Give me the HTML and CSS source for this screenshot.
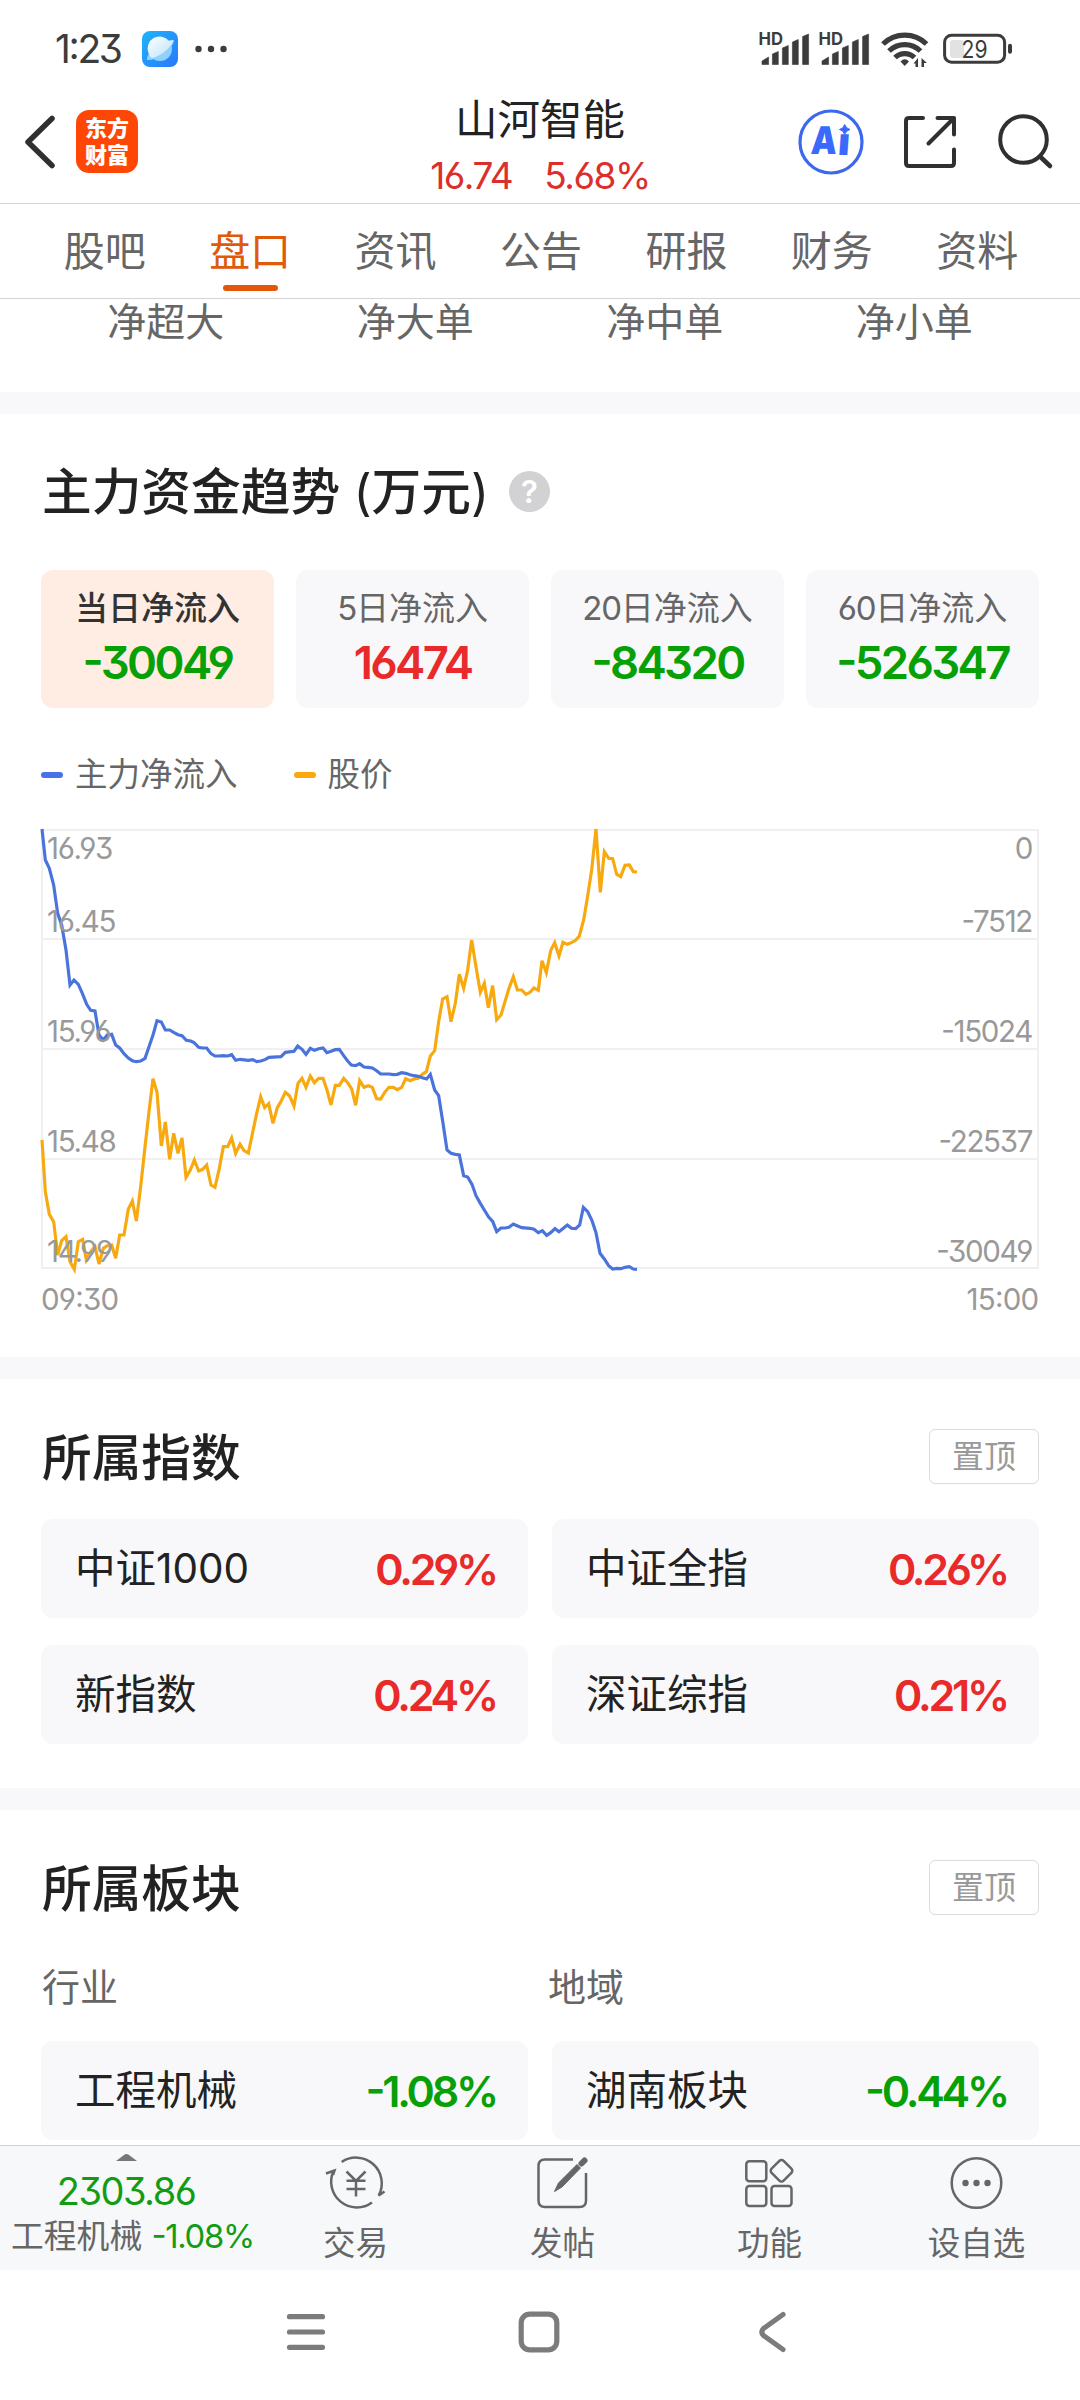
FILE: index.html
```html
<!DOCTYPE html>
<html lang="zh-CN">
<head>
<meta charset="utf-8">
<title>山河智能</title>
<link rel="stylesheet" href="styles.css">
</head>
<body>
<div class="phone">
  <div class="status">
    <span class="clock num">1:23</span>
    <svg class="app-badge" width="36" height="36" viewBox="0 0 36 36">
      <defs>
        <linearGradient id="sky" x1="0" y1="0" x2="1" y2="1"><stop offset="0" stop-color="#1fb4fb"/><stop offset="1" stop-color="#2a78fb"/></linearGradient>
        <linearGradient id="globe" x1="0" y1="0" x2="1" y2="1"><stop offset="0" stop-color="#fff"/><stop offset="1" stop-color="#b9e2fd"/></linearGradient>
      </defs>
      <rect width="36" height="36" rx="8" fill="url(#sky)"/>
      <path d="M5 29 Q4 26 9 20 L26 10 Q31 8 32 10 Q31 15 22 22 Q12 30 5 29Z" fill="#8fd2fc"/>
      <circle cx="18" cy="18" r="12" fill="#8fd0fc"/>
      <path d="M6.500 22 A12 12 0 0 1 27 10 L31.500 9 Q30 15 21 22 Q13 27 9.500 27 Q7.500 25 6.500 22Z" fill="url(#globe)"/>
    </svg>
    <svg width="34" height="10" viewBox="0 0 34 10" fill="#3c3c3c"><circle cx="4.500" cy="5" r="3.200"/><circle cx="17" cy="5" r="3.200"/><circle cx="29.500" cy="5" r="3.200"/></svg>
    <svg class="signals" width="260" height="40" viewBox="756 30 260 40" fill="#3c3c3c">
      <g id="sim">
        <text x="758.500" y="45.300" class="hd" textLength="24.500" lengthAdjust="spacingAndGlyphs">HD</text>
        <path stroke="#3c3c3c" stroke-width=".6" stroke-linejoin="round" d="M762 64.500V61L768.600 57V64.500ZM772.400 64.500V54L778.300 51.500V64.500ZM782.400 64.500V48L788.300 45.500V64.500ZM792.400 64.500V42L798.300 39.500V64.500ZM802.600 64.500V36.500L808.600 34V64.500Z"/>
      </g>
      <use href="#sim" x="60"/>
      <g fill="none" stroke="#3c3c3c" stroke-width="5.200">
        <path d="M883 44A31 31 0 0 1 926.500 44"/>
        <path d="M889 51A22.500 22.500 0 0 1 920.500 51"/>
        <path d="M895 57.500A14 14 0 0 1 914.500 57.500"/>
      </g>
      <path d="M904.700 66L900.500 61.500Q904.700 57 909 61.500Z"/>
      <path d="M918 58V67H915.500V63.500L913.500 63.500ZM921.500 67V58L927 63H924V67Z"/>
      <rect x="944.600" y="35.200" width="60" height="27" rx="7" fill="none" stroke="#3c3c3c" stroke-width="3"/>
      <rect x="950" y="40" width="14" height="18" rx="3" fill="#e2e2e2"/>
      <rect x="1008" y="43.700" width="4" height="10" rx="2"/>
      <text x="961.500" y="57.600" class="charge" textLength="26" lengthAdjust="spacingAndGlyphs">29</text>
    </svg>
  </div>

  <header class="topbar">
    <div class="brand">
      <svg width="36" height="56" viewBox="0 0 36 56" fill="none" stroke="#303030" stroke-width="5.500" stroke-linecap="round" stroke-linejoin="round"><path d="M30 4.500L6 28L30 51.500"/></svg>
      <div class="logo"><span>东方</span><span>财富</span></div>
    </div>
    <div class="quote">
      <h1>山河智能</h1>
      <p class="num"><span>16.74</span><span>5.68%</span></p>
    </div>
    <svg class="tools" width="260" height="70" viewBox="796 107 260 70">
      <circle cx="831" cy="142" r="31" fill="none" stroke="#3c68ee" stroke-width="3.200"/>
      <text class="ai" x="810" y="154" textLength="26" lengthAdjust="spacingAndGlyphs" transform="translate(11 0) skewX(-4)">A</text>
      <text class="ai" x="837" y="155" textLength="12" lengthAdjust="spacingAndGlyphs" transform="translate(11 0) skewX(-4)">ı</text>
      <path d="M844.700 124.500Q846 128.500 850 129.500Q846 130.500 844.700 134.500Q843.500 130.500 839.500 129.500Q843.500 128.500 844.700 124.500Z" fill="#3b69fb" stroke="#3b69fb"/>
      <g fill="none" stroke="#303030" stroke-width="4" stroke-linecap="round" stroke-linejoin="round">
        <path d="M923 118H909Q906 118 906 121V163Q906 166 909 166H951Q954 166 954 163V149.500"/>
        <path d="M937.500 118H954V134.500M953.500 118.500L928.500 143.500"/>
        <circle cx="1023.500" cy="139.500" r="23.300"/>
        <path d="M1040 156.500L1050 166" stroke-width="4.500"/>
      </g>
    </svg>
  </header>

  <nav class="tabs">
    <a>股吧</a><a class="on">盘口</a><a>资讯</a><a>公告</a><a>研报</a><a>财务</a><a>资料</a>
  </nav>

  <main>
    <section class="flows"><span>净超大</span><span>净大单</span><span>净中单</span><span>净小单</span></section>

    <section class="trend">
      <div class="head">
        <h2>主力资金趋势 <span class="paren">(</span>万元<span class="paren">)</span></h2>
        <span class="help">?</span>
      </div>
      <div class="periods">
        <div class="period active"><span>当日净流入</span><b class="num down">-30049</b></div>
        <div class="period"><span><i class="num">5</i>日净流入</span><b class="num up">16474</b></div>
        <div class="period"><span><i class="num">20</i>日净流入</span><b class="num down">-84320</b></div>
        <div class="period"><span><i class="num">60</i>日净流入</span><b class="num down">-526347</b></div>
      </div>
      <div class="legend"><span class="key blue">主力净流入</span><span class="key gold">股价</span></div>
      <svg class="chart" width="1080" height="510" viewBox="0 0 1080 510">
        <g fill="none" stroke="#f0f0f0" stroke-width="2">
          <rect x="42" y="20" width="996" height="438"/>
          <path d="M41 129H1039M41 239H1039M41 349H1039"/>
        </g>
        <g class="lines" transform="translate(30 0) scale(.33333)">
          <polyline stroke="#f7a90f" points="36,990 46,1145 58,1213 71,1235 83,1335 95,1292 108,1280 120,1355 133,1378 145,1295 158,1288 169,1350 182,1325 195,1310 207,1362 220,1315 232,1307 245,1305 257,1345 269,1275 282,1275 295,1197 307,1173 319,1233 332,1130 344,1020 357,905 369,806 381,847 394,1008 406,936 419,1048 431,970 444,1030 456,984 468,1102 481,1080 493,1050 506,1083 518,1078 530,1065 543,1125 555,1132 568,1075 580,1010 593,1010 605,984 617,1030 630,1003 642,1022 655,1029 667,972 680,910 692,860 704,893 716,881 729,940 742,893 754,872 766,847 779,858 792,888 804,820 816,805 828,832 841,798 853,818 866,805 879,805 891,840 903,885 916,826 928,826 941,805 953,818 965,837 977,886 989,812 1002,832 1015,827 1027,832 1040,866 1052,867 1064,847 1077,832 1090,832 1102,839 1115,832 1127,806 1140,812 1152,807 1165,805 1177,793 1189,785 1201,738 1214,722 1226,635 1238,567 1251,560 1263,635 1276,580 1288,493 1301,535 1313,480 1325,390 1338,470 1351,547 1363,520 1375,593 1388,527 1400,629 1413,615 1425,575 1437,535 1450,500 1462,540 1475,540 1488,553 1500,547 1512,534 1525,541 1536,452 1549,488 1562,422 1574,398 1587,438 1599,397 1612,403 1624,398 1637,391 1648,378 1661,330 1673,258 1685,180 1698,57 1711,247 1723,125 1736,145 1748,146 1760,193 1772,200 1785,166 1798,165 1810,185 1821,186"/>
          <polyline stroke="#4a73dc" points="36,57 46,150 58,175 71,225 83,310 95,345 108,420 120,525 132,510 145,523 157,550 170,583 182,601 195,603 207,675 220,690 232,675 245,673 257,705 269,714 282,731 295,744 307,752 319,755 332,753 345,745 357,710 370,672 381,632 394,636 406,660 419,660 431,667 444,674 456,677 469,691 482,693 492,698 506,712 518,714 530,714 543,731 555,738 567,738 580,737 593,738 605,734 617,751 630,748 655,751 668,749 680,755 692,753 705,749 717,742 753,740 766,727 792,724 803,708 816,718 828,733 841,715 853,721 866,716 879,714 891,728 903,724 916,719 928,718 941,737 953,753 964,765 977,767 989,761 1002,771 1015,772 1027,774 1040,782 1052,792 1077,792 1090,794 1102,793 1115,788 1127,790 1140,794 1152,797 1165,799 1177,803 1190,807 1201,793 1214,840 1226,857 1239,940 1251,1020 1263,1030 1276,1033 1288,1035 1301,1097 1313,1101 1326,1123 1338,1157 1351,1180 1363,1200 1376,1221 1388,1234 1400,1265 1413,1254 1425,1254 1437,1252 1450,1242 1463,1248 1475,1253 1500,1255 1512,1258 1525,1268 1537,1262 1550,1276 1562,1268 1575,1256 1587,1265 1600,1255 1612,1245 1624,1255 1637,1256 1649,1245 1660,1192 1673,1205 1686,1232 1698,1268 1710,1330 1723,1347 1736,1367 1748,1377 1760,1375 1773,1376 1785,1372 1798,1370 1810,1377 1821,1378"/>
        </g>
        <g class="axis">
          <text x="47" y="48.500">16.93</text><text x="47" y="121.500">16.45</text><text x="47" y="231.500">15.96</text><text x="47" y="341.500">15.48</text><text x="47" y="451.500">14.99</text>
          <text x="41" y="499.500" class="time">09:30</text>
          <g text-anchor="end"><text x="1032" y="48.500">0</text><text x="1032" y="121.500">-7512</text><text x="1032" y="231.500">-15024</text><text x="1032" y="341.500">-22537</text><text x="1032" y="451.500">-30049</text><text x="1038.500" y="499.500" class="time">15:00</text></g>
        </g>
      </svg>
    </section>

    <section class="group indexes">
      <div class="head"><h2>所属指数</h2><button>置顶</button></div>
      <div class="grid">
        <div class="item"><span>中证<i>1000</i></span><b class="num up">0.29%</b></div>
        <div class="item"><span>中证全指</span><b class="num up">0.26%</b></div>
        <div class="item"><span>新指数</span><b class="num up">0.24%</b></div>
        <div class="item"><span>深证综指</span><b class="num up">0.21%</b></div>
      </div>
    </section>

    <section class="group sectors">
      <div class="head"><h2>所属板块</h2><button>置顶</button></div>
      <div class="kinds"><span>行业</span><span>地域</span></div>
      <div class="grid">
        <div class="item"><span>工程机械</span><b class="num down">-1.08%</b></div>
        <div class="item"><span>湖南板块</span><b class="num down">-0.44%</b></div>
      </div>
    </section>
  </main>

  <footer class="dock">
    <div class="ticker">
      <svg width="21" height="7" viewBox="0 0 21 7"><path d="M0 7L8 1Q10.500 -1 13 1L21 7Z" fill="#777"/></svg>
      <strong class="num">2303.86</strong>
      <p>工程机械 <span class="num">-1.08%</span></p>
    </div>
    <a class="act">
      <svg width="64" height="60" viewBox="0 0 64 60"><path d="M17.700 9A25.700 25.700 0 0 1 54.700 42.500L60.500 38.500M9.500 18A25.700 25.700 0 0 0 48 49.500M2 20.500L10.500 17.500L9 22"/><path d="M22.500 18.500L32 28L41.500 18.500M22.500 27.700H41.500M22.500 36H41.500M32 28V43.500"/></svg>
      <span>交易</span>
    </a>
    <a class="act">
      <svg width="64" height="60" viewBox="0 0 64 60"><path d="M42 6.500H14Q7.500 6.500 7.500 13V47.500Q7.500 54 14 54H48.500Q55 54 55 47.500V20"/><path d="M23.500 38.500L27.500 30L46 11.500L49.500 15L31 34Z" fill="#666" stroke-width="1"/><path d="M50.500 10.500L53.500 7.500" stroke-width="6" stroke-linecap="round"/></svg>
      <span>发帖</span>
    </a>
    <a class="act">
      <svg width="64" height="60" viewBox="0 0 64 60"><rect x="8.300" y="8.300" width="20" height="20" rx="3"/><rect x="8.300" y="33" width="20" height="20" rx="3"/><rect x="33.500" y="33" width="20" height="20" rx="3"/><rect x="35" y="9.300" width="17" height="17" rx="3" transform="rotate(45 43.500 17.800)"/></svg>
      <span>功能</span>
    </a>
    <a class="act">
      <svg width="64" height="60" viewBox="0 0 64 60"><circle cx="31.500" cy="30" r="24.800"/><g fill="#666" stroke="none"><circle cx="20.500" cy="30" r="3.200"/><circle cx="31.500" cy="30" r="3.200"/><circle cx="42.500" cy="30" r="3.200"/></g></svg>
      <span>设自选</span>
    </a>
  </footer>

  <div class="sysnav">
    <svg width="40" height="44" viewBox="0 0 40 44"><path d="M3.500 6.700H36.500M3.500 22H36.500M3.500 37.300H36.500"/></svg>
    <svg width="44" height="44" viewBox="0 0 44 44"><rect x="4.200" y="4.200" width="35.600" height="35.600" rx="8.500"/></svg>
    <svg width="30" height="44" viewBox="0 0 30 44"><path d="M26 4.500L6.500 18.500Q3 22 6.500 25.500L26 39.500"/></svg>
  </div>
</div>
</body>
</html>
```
FILE: styles.css
```css
* { box-sizing: border-box; margin: 0; padding: 0; }

body {
  width: 1080px;
  height: 2400px;
  overflow: hidden;
  background: #fff;
  color: #222;
  font-family: Inter, "Noto Sans CJK SC", sans-serif;
}

i, b, strong { font-style: normal; }
h1, h2 { font-weight: 400; }

.phone { display: flex; flex-direction: column; height: 2400px; }

.num, .axis {
  font-feature-settings: "cv03", "cv04", "cv09", "case";
  letter-spacing: -0.04em;
}
.up { color: #e92a2a; }
.down { color: #07a007; }

/* status bar */
.status { display: flex; align-items: center; height: 98px; padding: 0 64px 0 55px; }
.clock { width: 87px; font-size: 39px; line-height: 98px; color: #3c3c3c; letter-spacing: -0.06em; }
.app-badge { margin-right: 16px; }
.signals { margin-left: auto; margin-top: 2px; }
.hd { font-size: 17px; font-weight: 700; }
.charge { font-size: 24px; }

/* title bar */
.topbar {
  display: grid;
  grid-template-columns: 1fr 300px 1fr;
  align-items: start;
  height: 106px;
  padding: 0 24px 0 22px;
  border-bottom: 1px solid #d4d4d4;
}
.brand { display: flex; align-items: center; gap: 18px; padding-top: 12px; }
.logo {
  display: flex;
  flex-direction: column;
  align-items: center;
  justify-content: center;
  width: 62px;
  height: 63px;
  border-radius: 13px;
  background: #ff4605;
  color: #fff;
  font-size: 22px;
  font-weight: 900;
  line-height: 27px;
}
.quote { display: flex; flex-direction: column; align-items: center; gap: 6px; padding-left: 2px; }
.quote h1 { font-size: 42.500px; line-height: 44px; }
.quote p { display: flex; gap: 32px; font-size: 37px; line-height: 56px; color: #dc2f2c; }
.tools { justify-self: end; margin-top: 9px; }
.ai { font-size: 38px; font-weight: 900; fill: #3b69fb; }

/* tabs */
.tabs { display: flex; height: 95px; padding: 0 30px 0 32px; border-bottom: 1px solid #d4d4d4; }
.tabs a {
  flex: 1;
  display: flex;
  flex-direction: column;
  align-items: center;
  font-size: 41px;
  line-height: 95px;
  color: #666;
}
.tabs .on { color: #e05a0b; }
.tabs .on::after {
  content: "";
  width: 55px;
  height: 6px;
  margin-top: -14px;
  border-radius: 3px;
  background: #e2570a;
}

main { height: 1846px; overflow: hidden; }

.flows { display: flex; height: 93px; padding: 0 41px; }
.flows span { flex: 1; text-align: center; font-size: 39px; line-height: 46px; color: #666; }

.trend, .group { border-top: 22px solid #f8f8fa; }
.head { display: flex; align-items: center; padding: 0 41px 0 42px; }
.head h2 { padding-top: 1px; font-size: 49.700px; font-weight: 500; line-height: 60px; color: #222; }

/* capital trend */
.trend { height: 965px; }
.trend .head { height: 155px; gap: 20px; }
.trend .head + .periods { margin-top: 1px; }
.paren { font-weight: 400; }
.help {
  width: 41px;
  height: 41px;
  border-radius: 50%;
  background: #d2d2d4;
  color: #fff;
  font-size: 31px;
  font-weight: 600;
  line-height: 41px;
  text-align: center;
}
.periods { display: grid; grid-template-columns: repeat(4, 1fr); gap: 22px; padding: 0 41px; }
.period {
  display: flex;
  flex-direction: column;
  align-items: center;
  height: 138px;
  padding-top: 11px;
  border-radius: 12px;
  background: #f8f8fa;
}
.period span { font-size: 33px; line-height: 55px; color: #666; }
.period b { font-size: 45.500px; font-weight: 600; line-height: 54px; letter-spacing: -0.058em; }
.period.active { background: #ffede4; }
.period.active span { font-weight: 500; color: #333; }

.legend { display: flex; gap: 56px; height: 102px; padding: 0 41px; }
.key { display: flex; align-items: center; gap: 12px; padding-top: 32px; font-size: 32.500px; line-height: 70px; color: #666; }
.key::before { content: ""; width: 22px; height: 6px; border-radius: 3px; background: #4872e8; }
.key.gold::before { background: #faa80e; }

.chart { display: block; }
.lines { fill: none; stroke-width: 9.500; }
.axis { font-size: 29.500px; fill: #999; letter-spacing: -0.045em; }
.time { letter-spacing: -0.025em; }

/* index and sector groups */
.group .head { justify-content: space-between; height: 140px; padding-top: 15px; }
.group h2 { padding-top: 3px; }
.group button {
  width: 110px;
  height: 55px;
  border: 1px solid #dcdcdc;
  border-radius: 6px;
  background: #fff;
  color: #999;
  font: inherit;
  font-size: 32px;
  line-height: 50px;
}
.grid { display: grid; grid-template-columns: 1fr 1fr; gap: 27px 24px; padding: 0 41px; }
.item {
  display: flex;
  justify-content: space-between;
  height: 99px;
  padding: 0 32px 0 34px;
  border-radius: 12px;
  background: #f8f8fa;
  font-size: 40.500px;
  line-height: 100px;
}
.item b { font-size: 43px; font-weight: 600; letter-spacing: -0.075em; }
.indexes { height: 431px; }
.kinds { display: grid; grid-template-columns: 506px 1fr; height: 91px; padding: 9px 41px 0 42px; font-size: 38px; line-height: 56px; color: #666; }

/* bottom dock */
.dock { display: flex; height: 125px; border-top: 1px solid #d2d2d2; background: #f7f8fa; }
.ticker { display: flex; flex-direction: column; align-items: center; width: 252px; padding-top: 8px; color: #666; }
.ticker strong { font-size: 38px; font-weight: 400; line-height: 60px; color: #139c13; }
.ticker p { align-self: flex-start; padding-left: 11px; font-size: 32.800px; line-height: 30px; white-space: nowrap; }
.ticker p .num { color: #139c13; }
.act { flex: 1; display: flex; flex-direction: column; align-items: center; height: 124px; padding-top: 7px; color: #666; }
.act svg { flex: none; fill: none; stroke: #666; stroke-width: 2.500; }
.act span { font-size: 32.500px; line-height: 62px; }

/* system navigation */
.sysnav { display: flex; flex: 1; align-items: flex-start; padding: 40px 0 0 286px; }
.sysnav svg { fill: none; stroke: #7c7c7c; stroke-width: 5.200; stroke-linecap: round; }
.sysnav svg:nth-child(2) { margin-left: 191px; }
.sysnav svg:nth-child(3) { margin-left: 196px; }
```
